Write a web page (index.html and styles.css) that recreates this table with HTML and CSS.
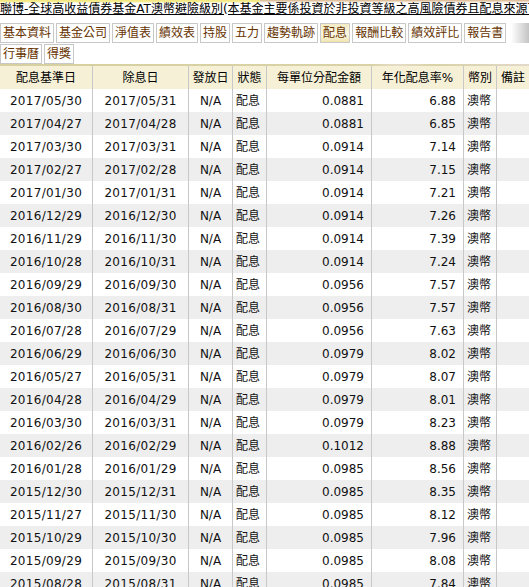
FILE: index.html
```html
<!DOCTYPE html>
<html lang="zh-Hant">
<head>
<meta charset="utf-8">
<title>配息</title>
<link rel="stylesheet" href="styles.css">
</head>
<body>
<div class="page">
  <div class="title"><span class="title-text">聯博-全球高收益債券基金AT澳幣避險級別(本基金主要係投資於非投資等級之高風險債券且配息來源可能為本金)</span></div>
  <div class="tabs">
    <a class="tab">基本資料</a><a class="tab">基金公司</a><a class="tab">淨值表</a><a class="tab">績效表</a><a class="tab">持股</a><a class="tab">五力</a><a class="tab">趨勢軌跡</a><a class="tab active">配息</a><a class="tab">報酬比較</a><a class="tab">績效評比</a><a class="tab">報告書</a><a class="tab">行事曆</a><a class="tab">得獎</a>
  </div>
  <div class="divider"></div>
  <table class="grid">
    <colgroup>
      <col class="c-base"><col class="c-ex"><col class="c-pay"><col class="c-st"><col class="c-amt"><col class="c-rate"><col class="c-cur"><col class="c-note">
    </colgroup>
    <thead>
      <tr><th>配息基準日</th><th>除息日</th><th>發放日</th><th>狀態</th><th>每單位分配金額</th><th>年化配息率%</th><th>幣別</th><th>備註</th></tr>
    </thead>
    <tbody>
      <tr><td class="ctr date">2017/05/30</td><td class="ctr date">2017/05/31</td><td class="ctr">N/A</td><td class="lft">配息</td><td class="rgt">0.0881</td><td class="rgt">6.88</td><td class="lft">澳幣</td><td></td></tr>
      <tr><td class="ctr date">2017/04/27</td><td class="ctr date">2017/04/28</td><td class="ctr">N/A</td><td class="lft">配息</td><td class="rgt">0.0881</td><td class="rgt">6.85</td><td class="lft">澳幣</td><td></td></tr>
      <tr><td class="ctr date">2017/03/30</td><td class="ctr date">2017/03/31</td><td class="ctr">N/A</td><td class="lft">配息</td><td class="rgt">0.0914</td><td class="rgt">7.14</td><td class="lft">澳幣</td><td></td></tr>
      <tr><td class="ctr date">2017/02/27</td><td class="ctr date">2017/02/28</td><td class="ctr">N/A</td><td class="lft">配息</td><td class="rgt">0.0914</td><td class="rgt">7.15</td><td class="lft">澳幣</td><td></td></tr>
      <tr><td class="ctr date">2017/01/30</td><td class="ctr date">2017/01/31</td><td class="ctr">N/A</td><td class="lft">配息</td><td class="rgt">0.0914</td><td class="rgt">7.21</td><td class="lft">澳幣</td><td></td></tr>
      <tr><td class="ctr date">2016/12/29</td><td class="ctr date">2016/12/30</td><td class="ctr">N/A</td><td class="lft">配息</td><td class="rgt">0.0914</td><td class="rgt">7.26</td><td class="lft">澳幣</td><td></td></tr>
      <tr><td class="ctr date">2016/11/29</td><td class="ctr date">2016/11/30</td><td class="ctr">N/A</td><td class="lft">配息</td><td class="rgt">0.0914</td><td class="rgt">7.39</td><td class="lft">澳幣</td><td></td></tr>
      <tr><td class="ctr date">2016/10/28</td><td class="ctr date">2016/10/31</td><td class="ctr">N/A</td><td class="lft">配息</td><td class="rgt">0.0914</td><td class="rgt">7.24</td><td class="lft">澳幣</td><td></td></tr>
      <tr><td class="ctr date">2016/09/29</td><td class="ctr date">2016/09/30</td><td class="ctr">N/A</td><td class="lft">配息</td><td class="rgt">0.0956</td><td class="rgt">7.57</td><td class="lft">澳幣</td><td></td></tr>
      <tr><td class="ctr date">2016/08/30</td><td class="ctr date">2016/08/31</td><td class="ctr">N/A</td><td class="lft">配息</td><td class="rgt">0.0956</td><td class="rgt">7.57</td><td class="lft">澳幣</td><td></td></tr>
      <tr><td class="ctr date">2016/07/28</td><td class="ctr date">2016/07/29</td><td class="ctr">N/A</td><td class="lft">配息</td><td class="rgt">0.0956</td><td class="rgt">7.63</td><td class="lft">澳幣</td><td></td></tr>
      <tr><td class="ctr date">2016/06/29</td><td class="ctr date">2016/06/30</td><td class="ctr">N/A</td><td class="lft">配息</td><td class="rgt">0.0979</td><td class="rgt">8.02</td><td class="lft">澳幣</td><td></td></tr>
      <tr><td class="ctr date">2016/05/27</td><td class="ctr date">2016/05/31</td><td class="ctr">N/A</td><td class="lft">配息</td><td class="rgt">0.0979</td><td class="rgt">8.07</td><td class="lft">澳幣</td><td></td></tr>
      <tr><td class="ctr date">2016/04/28</td><td class="ctr date">2016/04/29</td><td class="ctr">N/A</td><td class="lft">配息</td><td class="rgt">0.0979</td><td class="rgt">8.01</td><td class="lft">澳幣</td><td></td></tr>
      <tr><td class="ctr date">2016/03/30</td><td class="ctr date">2016/03/31</td><td class="ctr">N/A</td><td class="lft">配息</td><td class="rgt">0.0979</td><td class="rgt">8.23</td><td class="lft">澳幣</td><td></td></tr>
      <tr><td class="ctr date">2016/02/26</td><td class="ctr date">2016/02/29</td><td class="ctr">N/A</td><td class="lft">配息</td><td class="rgt">0.1012</td><td class="rgt">8.88</td><td class="lft">澳幣</td><td></td></tr>
      <tr><td class="ctr date">2016/01/28</td><td class="ctr date">2016/01/29</td><td class="ctr">N/A</td><td class="lft">配息</td><td class="rgt">0.0985</td><td class="rgt">8.56</td><td class="lft">澳幣</td><td></td></tr>
      <tr><td class="ctr date">2015/12/30</td><td class="ctr date">2015/12/31</td><td class="ctr">N/A</td><td class="lft">配息</td><td class="rgt">0.0985</td><td class="rgt">8.35</td><td class="lft">澳幣</td><td></td></tr>
      <tr><td class="ctr date">2015/11/27</td><td class="ctr date">2015/11/30</td><td class="ctr">N/A</td><td class="lft">配息</td><td class="rgt">0.0985</td><td class="rgt">8.12</td><td class="lft">澳幣</td><td></td></tr>
      <tr><td class="ctr date">2015/10/29</td><td class="ctr date">2015/10/30</td><td class="ctr">N/A</td><td class="lft">配息</td><td class="rgt">0.0985</td><td class="rgt">7.96</td><td class="lft">澳幣</td><td></td></tr>
      <tr><td class="ctr date">2015/09/29</td><td class="ctr date">2015/09/30</td><td class="ctr">N/A</td><td class="lft">配息</td><td class="rgt">0.0985</td><td class="rgt">8.08</td><td class="lft">澳幣</td><td></td></tr>
      <tr><td class="ctr date">2015/08/28</td><td class="ctr date">2015/08/31</td><td class="ctr">N/A</td><td class="lft">配息</td><td class="rgt">0.0985</td><td class="rgt">7.84</td><td class="lft">澳幣</td><td></td></tr>
    </tbody>
  </table>
</div>
</body>
</html>
```

FILE: styles.css
```css
html, body {
  margin: 0;
  padding: 0;
  overflow: hidden;
  background: #ffffff;
}
body {
  font-family: "DejaVu Sans", "Noto Sans CJK TC", sans-serif;
  font-size: 12px;
  color: #000;
}
.page {
  width: 529px;
  overflow: hidden;
}
.title {
  height: 21px;
  line-height: 19px;
  white-space: nowrap;
  overflow: hidden;
  background:
    linear-gradient(to bottom, #f3e77a 0, #f6ee9c 2px, #ffffff 3px) no-repeat 0 0 / 260px 21px,
    linear-gradient(to bottom, #d9b58a 0, #ffffff 3px) no-repeat 260px 0 / 269px 21px;
}
.title-text {
  font-size: 12px;
  color: #000;
  text-decoration: underline;
  text-underline-offset: 1px;
}
.tabs {
  margin-top: 2px;
  display: flex;
  flex-wrap: wrap;
  row-gap: 1px;
  background: linear-gradient(to right, rgba(255,255,255,0), #c4c4c4) no-repeat right top / 18px 20px;
}
.tab {
  box-sizing: border-box;
  height: 20px;
  line-height: 18px;
  padding: 0 2px;
  margin-right: 2px;
  border: 1px solid #c8c8c8;
  background: #ffffff;
  color: #663300;
  font-size: 12px;
  white-space: nowrap;
  cursor: pointer;
}
.tab.active {
  background: linear-gradient(to bottom, #f3ecc4, #fbf7e4 60%, #efe3ad);
}
.divider {
  height: 2px;
  background: linear-gradient(to right, #d6d0a0 0, #d8d2a6 70%, #e6dcc8 75%, #d8d2a6 82%, #e2d9c9 100%);
}
.grid {
  table-layout: fixed;
  border-collapse: separate;
  border-spacing: 0;
  width: 530px;
}
.c-base { width: 93px; }
.c-ex { width: 96px; }
.c-pay { width: 44px; }
.c-st { width: 34px; }
.c-amt { width: 105px; }
.c-rate { width: 92px; }
.c-cur { width: 33px; }
.c-note { width: 33px; }
.grid th, .grid td {
  box-sizing: border-box;
  height: 23px;
  padding: 0;
  border-right: 1px solid #c8c8c8;
  white-space: nowrap;
  overflow: hidden;
  font-size: 12px;
  line-height: 22px;
}
.grid th {
  background: #f6f1d6;
  font-weight: normal;
  text-align: center;
  color: #000;
}
.grid td {
  color: #111;
}
.grid tbody tr:nth-child(even) td {
  background: #eeeeee;
}
.ctr { text-align: center; }
.date { letter-spacing: 0.3px; }
.lft { text-align: left; padding-left: 3px !important; }
.rgt { text-align: right; padding-right: 7px !important; }
```
